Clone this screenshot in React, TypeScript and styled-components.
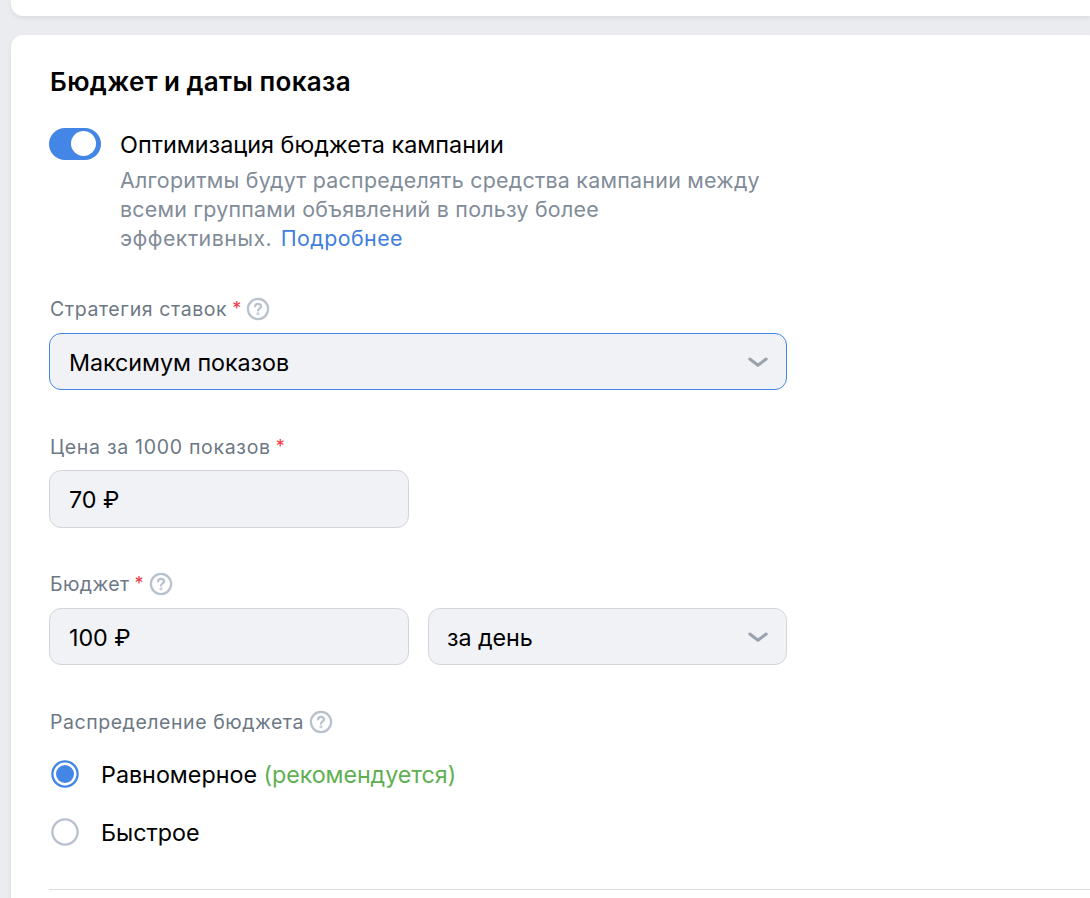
import React from 'react';
import styled, { createGlobalStyle } from 'styled-components';

const Global = createGlobalStyle`
  * { box-sizing: border-box; }
  body { margin: 0; background: #ebecf0; font-family: Inter, sans-serif; color: #000; overflow: hidden; }
`;

const Page = styled.main`
  height: 898px;
  padding-left: 11px;
  overflow: hidden;
  display: flex;
  flex-direction: column;
  gap: 19px;
`;
const PreviousCard = styled.section`
  flex: none;
  height: 16px;
  background: #fff;
  border-radius: 0 0 0 12px;
  box-shadow: 0 2px 4px rgba(0, 0, 0, 0.08);
`;
const Card = styled.section`
  flex: none;
  height: 900px;
  padding: 31px 0 0 38px;
  background: #fff;
  border-radius: 12px 0 0 0;
  box-shadow: 0 2px 4px rgba(0, 0, 0, 0.08);
`;
const Line = styled.span<{ $size: number; $spacing?: number; $color?: string }>`
  font-size: ${p => p.$size}px;
  letter-spacing: ${p => p.$spacing ?? 0}px;
  color: ${p => p.$color ?? '#000'};
  white-space: nowrap;
`;
const Hint = styled.span<{ $spacing?: number }>`
  font-size: 21.4px;
  letter-spacing: ${p => p.$spacing ?? 0.26}px;
  color: #818c99;
  white-space: nowrap;
`;
const Link = styled.a`
  margin-left: 2px;
  color: #3f7fdf;
`;
const Title = styled.h1`
  margin: 0 0 0 1px;
  height: 32px;
  line-height: 32px;
  font-size: 26px;
  font-weight: 600;
  letter-spacing: 0.35px;
  word-spacing: -0.8px;
`;
const ToggleRow = styled.div`
  display: flex;
  margin-top: 30px;
  gap: 19px;
`;
const Switch = styled.button`
  flex: none;
  width: 52px;
  height: 32px;
  padding: 3px 5px;
  border: 0;
  border-radius: 16px;
  background: #4486e6;
  display: flex;
  justify-content: flex-end;
`;
const Thumb = styled.span`
  width: 25px;
  height: 25px;
  border-radius: 50%;
  background: #fff;
`;
const Description = styled.div`
  display: flex;
  flex-direction: column;
  line-height: 29px;
  padding-top: 2px;
`;
const ToggleTitle = styled.div`
  height: 36px;
`;
const Label = styled.div`
  display: flex;
  align-items: center;
  height: 24px;
  margin-left: 1px;
  line-height: 24px;
`;
const Star = styled.span`
  width: 9px;
  margin-left: 5px;
  color: #f03a45;
  font-size: 18px;
`;
const HelpIcon = styled.svg`
  margin-left: 5px;
  flex: none;
`;
const Group = styled.div<{ $top: number }>`
  margin-top: ${p => p.$top}px;
`;
const Fields = styled.div<{ $top?: number }>`
  display: flex;
  gap: 19px;
  margin-top: ${p => p.$top ?? 12}px;
`;
const Field = styled.div<{ $width: number; $height?: number; $active?: boolean }>`
  width: ${p => p.$width}px;
  height: ${p => p.$height ?? 57}px;
  border: 1px solid ${p => (p.$active ? '#4486e6' : '#d3d5d8')};
  border-radius: 12px;
  background: #f1f2f5;
  padding: 0 17px 0 19px;
  display: flex;
  align-items: center;
  justify-content: space-between;
`;
const PeriodField = styled(Field)`
  padding-left: 18px;
`;
const Value = styled.span<{ $top?: number }>`
  padding-top: ${p => p.$top ?? 2}px;
  font-size: 23.3px;
  letter-spacing: -0.05px;
  white-space: nowrap;
`;
const Radio = styled.div`
  display: flex;
  align-items: center;
  gap: 20px;
  height: 58px;
`;
const Divider = styled.div`
  height: 1px;
  margin-top: 28px;
  background: #dcdee1;
`;

const Help = () => (
  <HelpIcon width="24" height="24" viewBox="0 0 24 24" fill="none" stroke="#b8c1cc" strokeWidth="2.2" strokeLinecap="round">
    <circle cx="12" cy="12" r="10.1" />
    <path d="M9 9.5c.2-1.8 1.4-2.7 3-2.7s3 1 3 2.6c0 2.2-3 2.2-3 4.2" />
    <circle cx="12" cy="16.8" r=".45" />
  </HelpIcon>
);
const Chevron = () => (
  <svg width="22" height="14" viewBox="0 0 22 14" fill="none" stroke="#99a2ad" strokeWidth="3" strokeLinecap="round" strokeLinejoin="round">
    <path d="M2.8 4 11 10.2 19.2 4" />
  </svg>
);
const RadioMark = ({ checked }: { checked?: boolean }) => (
  <svg width="32" height="32" viewBox="0 0 32 32" fill="none">
    <circle cx="16" cy="16" r="12.6" stroke={checked ? '#4486e6' : '#b8c1cc'} strokeWidth="2.3" />
    {checked && <circle cx="16" cy="16" r="9" fill="#4486e6" />}
  </svg>
);

export default function App() {
  return (
    <>
      <Global />
      <Page>
        <PreviousCard />
        <Card>
          <Title>Бюджет и даты показа</Title>
          <ToggleRow>
            <Switch role="switch" aria-checked="true"><Thumb /></Switch>
            <Description>
              <ToggleTitle><Line $size={23.4}>Оптимизация бюджета кампании</Line></ToggleTitle>
              <Hint>Алгоритмы будут распределять средства кампании между</Hint>
              <Hint $spacing={0.24}>всеми группами объявлений в пользу более</Hint>
              <Hint $spacing={0.44}>эффективных. <Link>Подробнее</Link></Hint>
            </Description>
          </ToggleRow>
          <Group $top={44}>
            <Label><Line $size={19.5} $spacing={0.58} $color="#6d7885">Стратегия ставок</Line><Star>*</Star><Help /></Label>
            <Fields>
              <Field $width={738} $active><Value>Максимум показов</Value><Chevron /></Field>
            </Fields>
          </Group>
          <Group $top={45}>
            <Label><Line $size={19.5} $spacing={0.7} $color="#6d7885">Цена за 1000 показов</Line><Star>*</Star></Label>
            <Fields $top={11}>
              <Field $width={360} $height={58}><Value $top={0}>70 ₽</Value></Field>
            </Fields>
          </Group>
          <Group $top={44}>
            <Label><Line $size={19.5} $spacing={0.4} $color="#6d7885">Бюджет</Line><Star>*</Star><Help /></Label>
            <Fields>
              <Field $width={360}><Value>100 ₽</Value></Field>
              <PeriodField $width={359}><Value>за день</Value><Chevron /></PeriodField>
            </Fields>
          </Group>
          <Group $top={45}>
            <Label><Line $size={19.5} $spacing={0.55} $color="#6d7885">Распределение бюджета</Line><Help /></Label>
            <Group $top={11}>
              <Radio><RadioMark checked /><Line $size={23.3}>Равномерное <Line $size={23.3} $spacing={-0.08} $color="#60b053">(рекомендуется)</Line></Line></Radio>
              <Radio><RadioMark /><Line $size={23.3}>Быстрое</Line></Radio>
            </Group>
          </Group>
          <Divider />
        </Card>
      </Page>
    </>
  );
}
